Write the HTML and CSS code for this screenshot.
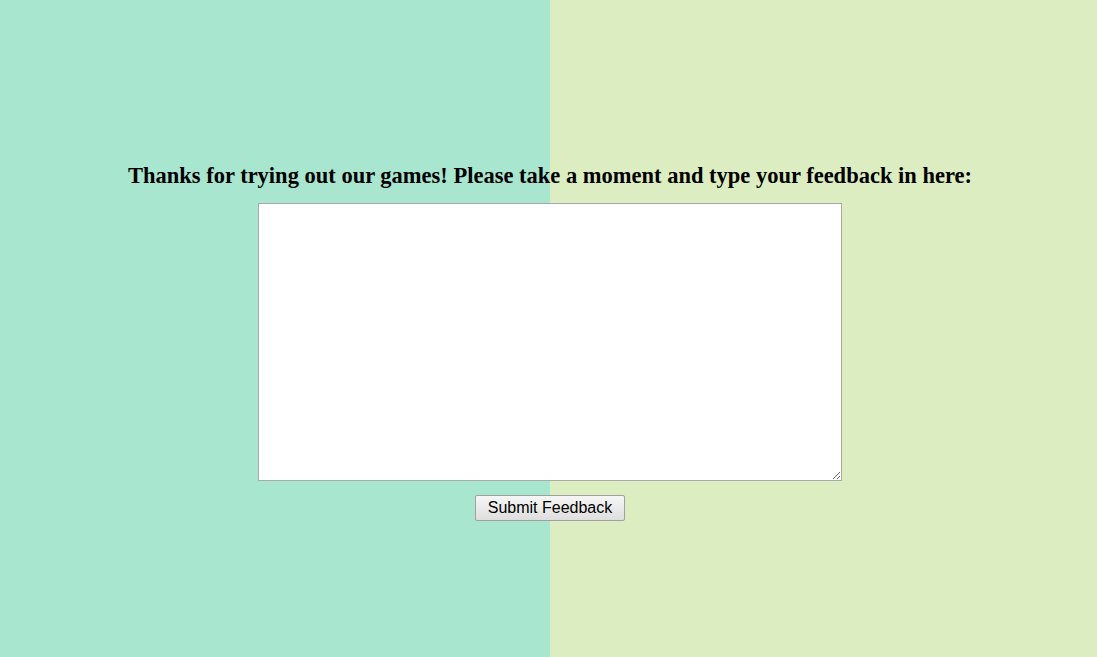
FILE: index.html
```html
<!DOCTYPE html>
<html>
<head>
<meta charset="utf-8">
<link rel="stylesheet" href="styles.css">
</head>
<body>
<main class="page">
  <h2 class="title">Thanks for trying out our games! Please take a moment and type your feedback in here:</h2>
  <textarea class="feedback"></textarea>
  <button class="submit">Submit Feedback</button>
</main>
</body>
</html>
```
FILE: styles.css
```css
html, body {
  margin: 0;
  padding: 0;
  height: 100%;
}
body {
  background: linear-gradient(to right, #a8e6cf 0, #a8e6cf 550px, #dcedc1 550px, #dcedc1 100%);
  font-family: "Liberation Serif", "Times New Roman", serif;
  overflow: hidden;
}
.page {
  width: 1100px;
  display: flex;
  flex-direction: column;
  align-items: center;
  padding-top: 162px;
}
.title {
  margin: 0 0 13px 0;
  font-size: 22.5px;
  font-weight: bold;
  color: #000;
  line-height: 28px;
  white-space: nowrap;
}
.feedback {
  box-sizing: border-box;
  width: 584px;
  height: 278px;
  margin: 0;
  padding: 2px;
  border: 1px solid #a9a9a9;
  background: #fff;
  resize: both;
  display: block;
}
.submit {
  margin-top: 14px;
  box-sizing: border-box;
  width: 150px;
  height: 26px;
  padding: 1px 6px;
  font-family: "Liberation Sans", Arial, sans-serif;
  font-size: 16px;
  color: #000;
  background: linear-gradient(to bottom, #f6f6f6, #dedede);
  border: 1px solid #a0a0a0;
  border-radius: 2px;
}
```
